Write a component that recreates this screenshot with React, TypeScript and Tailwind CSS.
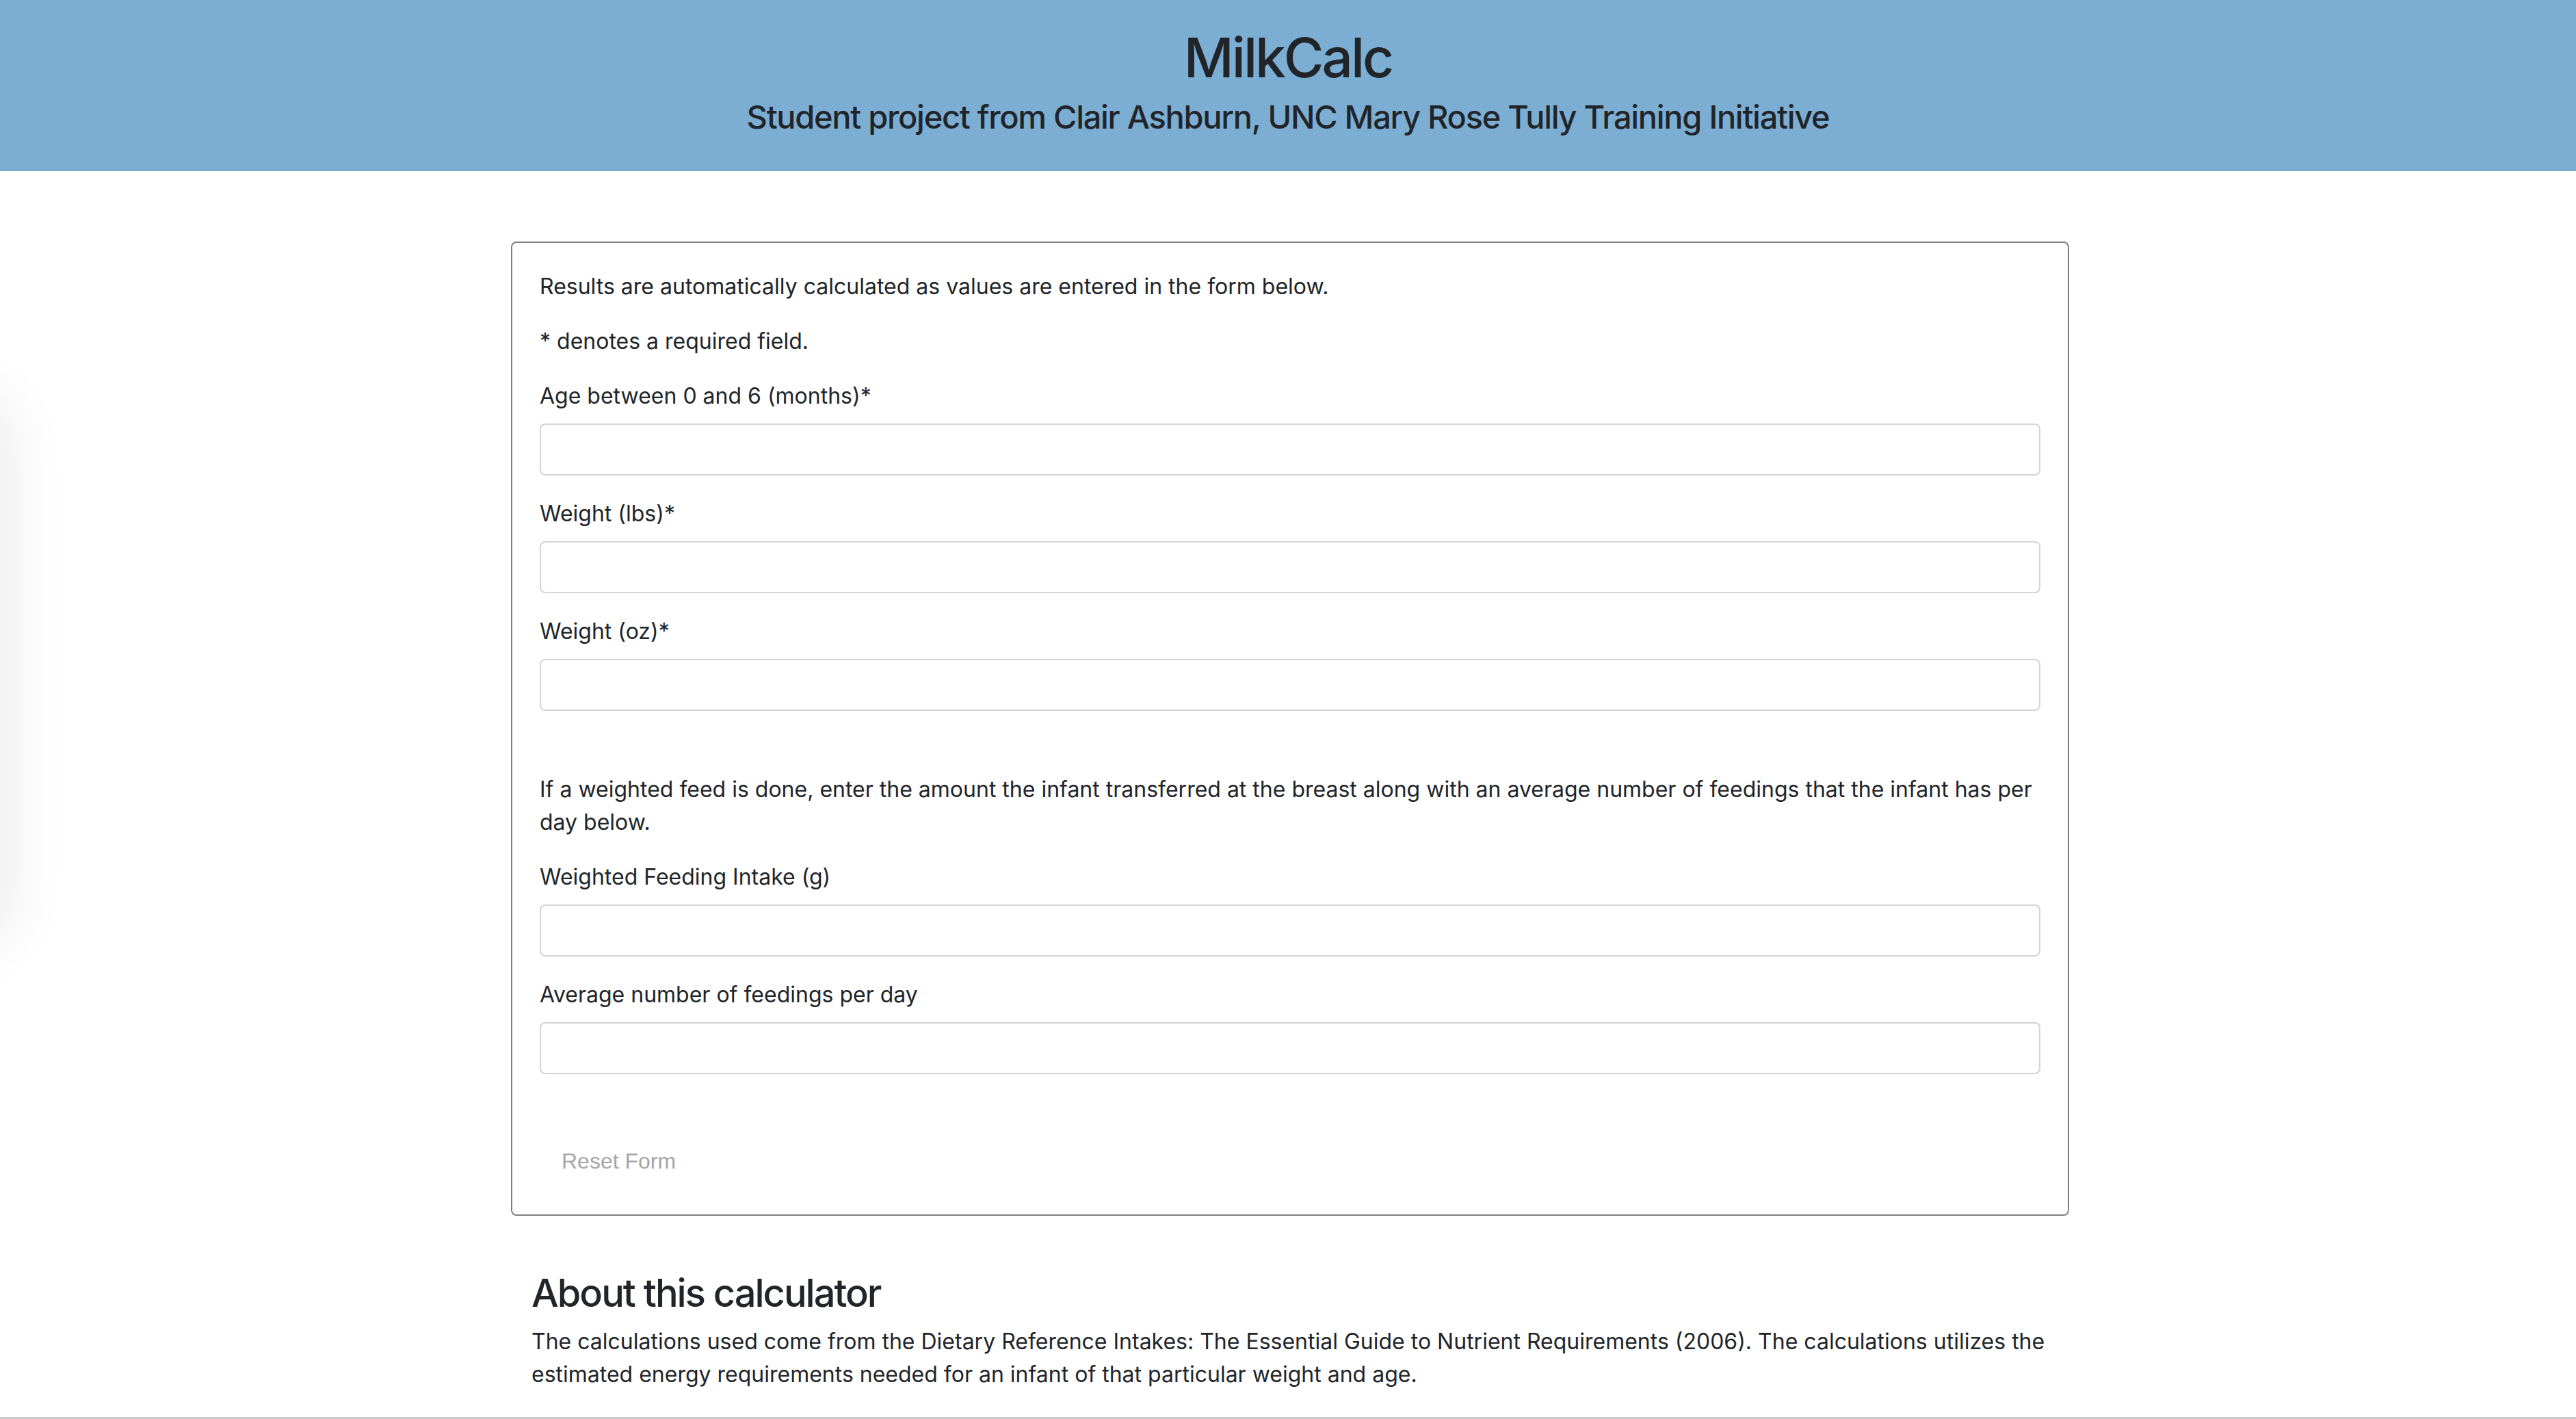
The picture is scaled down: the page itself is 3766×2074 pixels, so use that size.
import React from "react";

const fields = [
  { id: "age", label: "Age between 0 and 6 (months)*" },
  { id: "lbs", label: "Weight (lbs)*" },
  { id: "oz", label: "Weight (oz)*" },
];

const feedFields = [
  { id: "intake", label: "Weighted Feeding Intake (g)" },
  { id: "feedings", label: "Average number of feedings per day" },
];

function Field({ id, label }: { id: string; label: string }) {
  return (
    <div className="mb-[32px]">
      <label htmlFor={id} className="block mb-[16px]">
        {label}
      </label>
      <input
        id={id}
        type="number"
        className="block w-full h-[76px] border-2 border-[#d4d4d4] rounded-[8px] bg-white px-[24px] outline-none"
      />
    </div>
  );
}

export default function App() {
  return (
    <div className="relative min-h-screen overflow-hidden bg-white text-[#212529] font-['Inter','Roboto',sans-serif] text-[32px] leading-[48px]">
      {/* side panel shadow peeking in from the left */}
      <div className="absolute left-[-240px] top-[590px] w-[240px] h-[780px] rounded-[60px] bg-white shadow-[0_0_80px_24px_rgba(0,0,0,0.07)]" />

      {/* Header */}
      <header className="h-[250px] bg-[#7caed4] flex flex-col items-center pt-[36px]">
        <h1 className="text-[80px] leading-[96px] font-medium tracking-[-3px]">MilkCalc</h1>
        <h4 className="mt-[10px] text-[47px] leading-[58px] font-medium tracking-[-1.3px]">
          Student project from Clair Ashburn, UNC Mary Rose Tully Training Initiative
        </h4>
      </header>

      <main className="ml-[747px] w-[2278px] pt-[103px]">
        {/* Calculator card */}
        <div className="border-2 border-[#808080] rounded-[8px] p-[40px]">
          <p className="mb-[32px]">Results are automatically calculated as values are entered in the form below.</p>
          <p className="mb-[32px]">* denotes a required field.</p>

          {fields.map((f) => (
            <Field key={f.id} id={f.id} label={f.label} />
          ))}

          <p className="mt-[91px] mb-[32px]">
            If a weighted feed is done, enter the amount the infant transferred at the breast along with an average
            number of feedings that the infant has per day below.
          </p>

          {feedFields.map((f) => (
            <Field key={f.id} id={f.id} label={f.label} />
          ))}

          <button
            type="button"
            className="mt-[57px] h-[76px] px-[32px] font-['Liberation_Sans',Arial,sans-serif] text-[32px] text-[#a6a6a6]"
          >
            Reset Form
          </button>
        </div>

        {/* About */}
        <section className="px-[30px] pt-[80px]">
          <h3 className="text-[56px] leading-[67px] font-medium tracking-[-2px] mb-[13px]">About this calculator</h3>
          <p className="mb-[32px]">
            The calculations used come from the Dietary Reference Intakes: The Essential Guide to Nutrient Requirements
            (2006). The calculations utilizes the estimated energy requirements needed for an infant of that particular
            weight and age.
          </p>
        </section>
      </main>

      {/* bottom scrollbar edge */}
      <div className="fixed left-0 right-0 bottom-0 h-[3px] bg-[#cccccc]" />
    </div>
  );
}
